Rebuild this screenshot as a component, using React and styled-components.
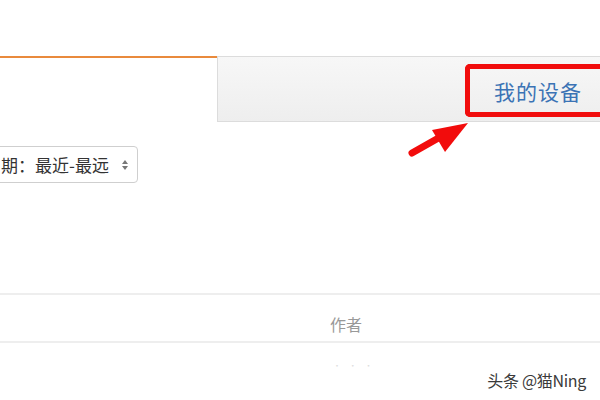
import styled, { createGlobalStyle } from "styled-components";

const Global = createGlobalStyle`
  html, body {
    margin: 0;
    padding: 0;
    background: #fff;
    overflow: hidden;
  }
  body {
    font-family: "Noto Sans CJK SC", "Noto Sans", sans-serif;
  }
`;

const Page = styled.div`
  position: relative;
  width: 600px;
  height: 400px;
  padding-top: 56px;
  box-sizing: border-box;
  overflow: hidden;
`;

const TabBar = styled.div`
  display: flex;
  height: 66px;
`;

const ActiveTab = styled.div`
  width: 217px;
  border-top: 2px solid #e98a3c;
  box-sizing: border-box;
`;

const GrayTab = styled.div`
  flex: 1;
  display: flex;
  justify-content: flex-end;
  align-items: flex-start;
  padding-top: 7px;
  box-sizing: border-box;
  border: 1px solid #dcdcdc;
  border-right: none;
  background: linear-gradient(#f7f7f7, #eeeeee);
`;

const DeviceLink = styled.div`
  width: 135px;
  height: 53px;
  box-sizing: border-box;
  border: 5px solid #f10d0d;
  border-right: none;
  border-radius: 5px 0 0 5px;
  display: flex;
  align-items: center;
  padding-left: 24px;
  font-size: 21px;
  color: #3b73b5;
  letter-spacing: 1px;
`;

const Toolbar = styled.div`
  display: flex;
  margin-top: 24px;
`;

const Select = styled.div`
  display: flex;
  align-items: center;
  gap: 13px;
  margin-left: -10px;
  height: 37px;
  padding: 0 9px 0 10px;
  box-sizing: border-box;
  border: 1px solid #cfcfcf;
  border-radius: 4px;
  font-size: 17px;
  color: #333;
`;

const Sort = styled.span`
  display: flex;
  flex-direction: column;
  gap: 2px;
`;

const Tri = styled.span`
  width: 0;
  height: 0;
  border-left: 3px solid transparent;
  border-right: 3px solid transparent;
  ${(p) => (p.up ? "border-bottom: 4px solid #777;" : "border-top: 4px solid #777;")}
`;

const Table = styled.div`
  margin-top: 110px;
`;

const HeadRow = styled.div`
  display: grid;
  grid-template-columns: 330px 1fr;
  height: 50px;
  align-items: center;
  padding-top: 12px;
  border-top: 2px solid #eeeeee;
  border-bottom: 2px solid #eeeeee;
  box-sizing: border-box;
  font-size: 16px;
  color: #999;
`;

const Row = styled.div`
  display: grid;
  grid-template-columns: 333px 1fr;
  height: 44px;
  align-items: center;
  font-size: 8px;
  color: #ddd;
  letter-spacing: 3px;
`;

const Arrow = styled.svg`
  position: absolute;
  left: 400px;
  top: 112px;
`;

const Watermark = styled.div`
  position: absolute;
  right: 14px;
  bottom: 8px;
  font-size: 16px;
  color: #3a3a3a;
  letter-spacing: -0.3px;
`;

export default function App() {
  return (
    <Page>
      <Global />
      <TabBar>
        <ActiveTab />
        <GrayTab>
          <DeviceLink>我的设备</DeviceLink>
        </GrayTab>
      </TabBar>
      <Toolbar>
        <Select>
          <span>期：最近-最远</span>
          <Sort>
            <Tri up />
            <Tri />
          </Sort>
        </Select>
      </Toolbar>
      <Table>
        <HeadRow>
          <span />
          <span>作者</span>
        </HeadRow>
        <Row>
          <span />
          <span>·&nbsp;·&nbsp;·</span>
        </Row>
      </Table>
      <Arrow width="80" height="52" viewBox="0 0 80 52">
        <line x1="12" y1="41" x2="42" y2="24" stroke="#f20c0c" strokeWidth="7" strokeLinecap="round" />
        <polygon points="68,11 32,18 45,40" fill="#f20c0c" />
      </Arrow>
      <Watermark>头条 @猫Ning</Watermark>
    </Page>
  );
}
